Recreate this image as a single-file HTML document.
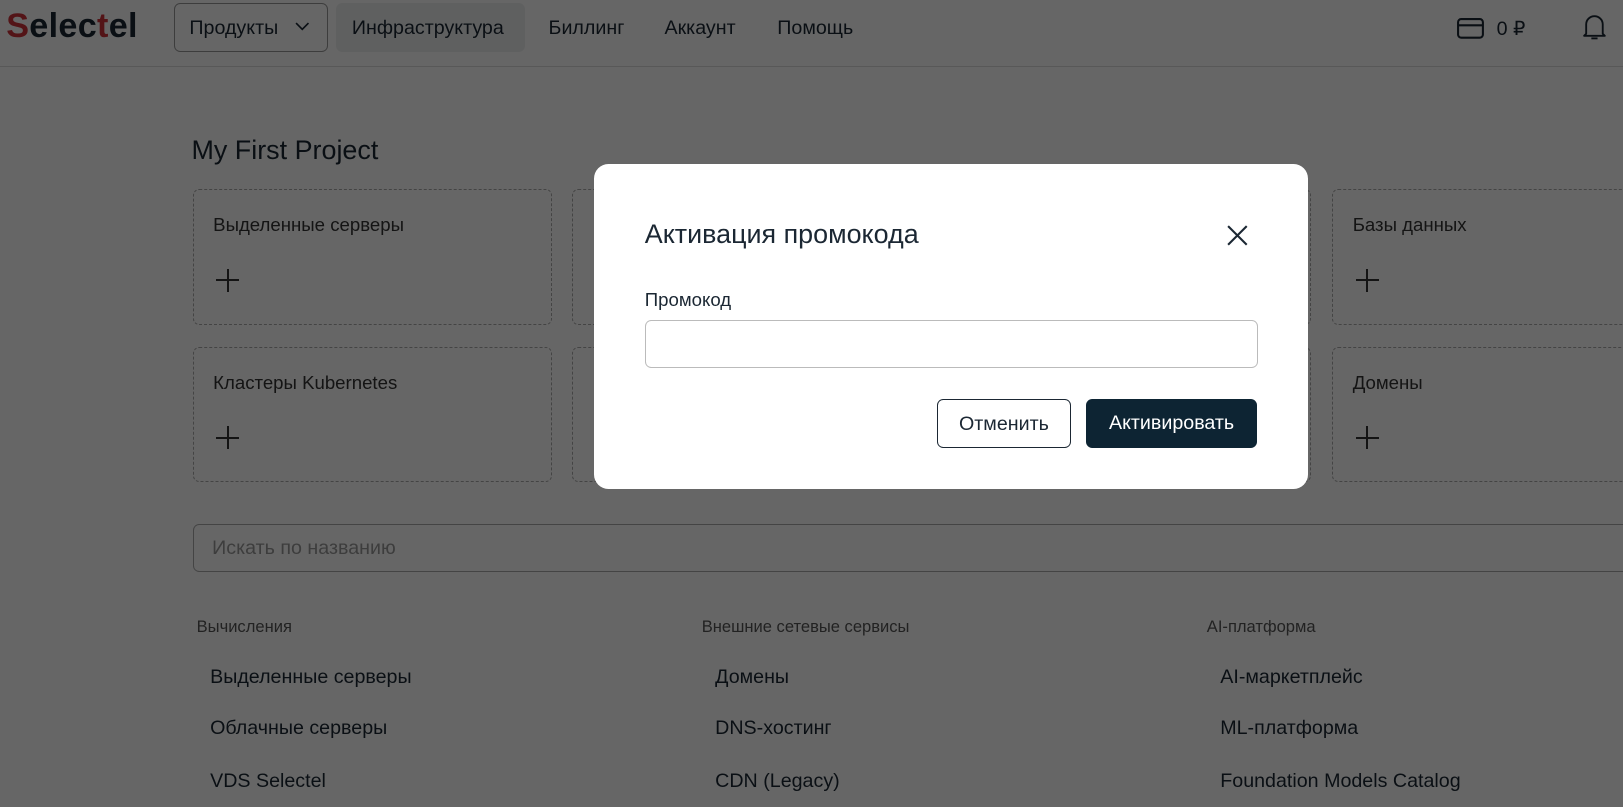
<!DOCTYPE html>
<html><head><meta charset="utf-8"><style>
*{box-sizing:border-box;margin:0;padding:0}
html,body{width:1623px;height:807px;overflow:hidden;background:#fff}
body{font-family:"Liberation Sans",sans-serif;color:#1b2733}
#w{zoom:1.035;width:1568px;height:780px;position:relative;overflow:hidden}
.a{position:absolute;white-space:nowrap}
.hdr{position:absolute;left:0;top:0;width:1568px;height:65px;border-bottom:1px solid #ddd}
.nav{font-size:19px;top:16px}
.card{position:absolute;border:1px dashed #aaa;border-radius:6px;width:347px;height:131px}
.card .t{position:absolute;left:19px;top:23px;font-size:18px;color:#333}
.card .p{position:absolute;left:22px;top:76px;width:22px;height:22px}
.card .p:before,.card .p:after{content:"";position:absolute;background:#333}
.card .p:before{left:10px;top:0;width:2px;height:22px}
.card .p:after{left:0;top:10px;width:22px;height:2px}
.h{font-size:16px;color:#555;top:596px}
.it{font-size:19px;color:#1b2733}
#ov{position:absolute;left:0;top:0;width:1568px;height:780px;background:rgba(0,0,0,.6)}
#m{position:absolute;left:574px;top:158px;width:690px;height:314px;background:#fff;border-radius:14px}
</style></head><body><div id="w">
<div class="hdr"></div>
<div class="a" style="left:6px;top:7px;font-size:33px;font-weight:bold;letter-spacing:0.3px;color:#1b2733"><span style="color:#d0323b">S</span>elec<span style="color:#d0323b">t</span>el</div>
<div class="a" style="left:168px;top:3px;width:149px;height:47px;border:1px solid #999;border-radius:6px"></div>
<div class="a nav" style="left:183px">Продукты</div>
<svg class="a" style="left:284px;top:19px" width="16" height="12" viewBox="0 0 16 12"><path d="M2 3l6 6 6-6" fill="none" stroke="#1b2733" stroke-width="1.6"/></svg>
<div class="a" style="left:325px;top:3px;width:182px;height:47px;background:#eef0f1;border-radius:6px"></div>
<div class="a nav" style="left:340px">Инфраструктура</div>
<div class="a nav" style="left:530px">Биллинг</div>
<div class="a nav" style="left:642px">Аккаунт</div>
<div class="a nav" style="left:751px">Помощь</div>
<svg class="a" style="left:1407px;top:16px" width="28" height="22" viewBox="0 0 28 22"><rect x="2" y="2" width="24" height="18" rx="3" fill="none" stroke="#1b2733" stroke-width="2"/><path d="M2 8h24" stroke="#1b2733" stroke-width="2"/></svg>
<div class="a nav" style="left:1446px">0 ₽</div>
<svg class="a" style="left:1528px;top:12px" width="26" height="28" viewBox="0 0 26 28"><path d="M5 21V12a8 8 0 0 1 16 0v9l2 2H3z" fill="none" stroke="#1b2733" stroke-width="1.8" stroke-linejoin="round"/><path d="M10 25.5h6" stroke="#1b2733" stroke-width="1.8"/></svg>
<div class="a" style="left:185px;top:130px;font-size:26px">My First Project</div>
<div class="card" style="left:186px;top:183px"><div class="t">Выделенные серверы</div><div class="p"></div></div>
<div class="card" style="left:553px;top:183px"></div>
<div class="card" style="left:920px;top:183px"></div>
<div class="card" style="left:1287px;top:183px;width:300px"><div class="t">Базы данных</div><div class="p"></div></div>
<div class="card" style="left:186px;top:335px"><div class="t">Кластеры Kubernetes</div><div class="p"></div></div>
<div class="card" style="left:553px;top:335px"></div>
<div class="card" style="left:920px;top:335px"></div>
<div class="card" style="left:1287px;top:335px;width:300px"><div class="t">Домены</div><div class="p"></div></div>
<div class="a" style="left:186px;top:506px;width:1400px;height:47px;border:1px solid #aaa;border-radius:6px"></div>
<div class="a" style="left:205px;top:519px;font-size:19px;color:#999">Искать по названию</div>
<div class="a h" style="left:190px">Вычисления</div>
<div class="a h" style="left:678px">Внешние сетевые сервисы</div>
<div class="a h" style="left:1166px">AI-платформа</div>
<div class="a it" style="left:203px;top:643px">Выделенные серверы</div>
<div class="a it" style="left:203px;top:693px">Облачные серверы</div>
<div class="a it" style="left:203px;top:744px">VDS Selectel</div>
<div class="a it" style="left:691px;top:643px">Домены</div>
<div class="a it" style="left:691px;top:693px">DNS-хостинг</div>
<div class="a it" style="left:691px;top:744px">CDN (Legacy)</div>
<div class="a it" style="left:1179px;top:643px">AI-маркетплейс</div>
<div class="a it" style="left:1179px;top:693px">ML-платформа</div>
<div class="a it" style="left:1179px;top:744px">Foundation Models Catalog</div>
<div id="ov"></div>
<div id="m">
<div class="a" style="left:49px;top:54px;font-size:26px;color:#1b2733">Активация промокода</div>
<svg class="a" style="left:610px;top:57px" width="24" height="24" viewBox="0 0 24 24"><path d="M3 3l18 18M21 3L3 21" stroke="#1b2733" stroke-width="2"/></svg>
<div class="a" style="left:49px;top:121px;font-size:18px;color:#1b2733">Промокод</div>
<div class="a" style="left:49px;top:151px;width:592px;height:47px;border:1px solid #bbb;border-radius:6px"></div>
<div class="a" style="left:331px;top:228px;width:130px;height:47px;border:1px solid #1b2733;border-radius:6px;font-size:19px;text-align:center;line-height:47px">Отменить</div>
<div class="a" style="left:475px;top:228px;width:166px;height:47px;background:#0d2433;border-radius:6px;font-size:19px;text-align:center;line-height:48px;color:#fff">Активировать</div>
</div>
</div></body></html>
